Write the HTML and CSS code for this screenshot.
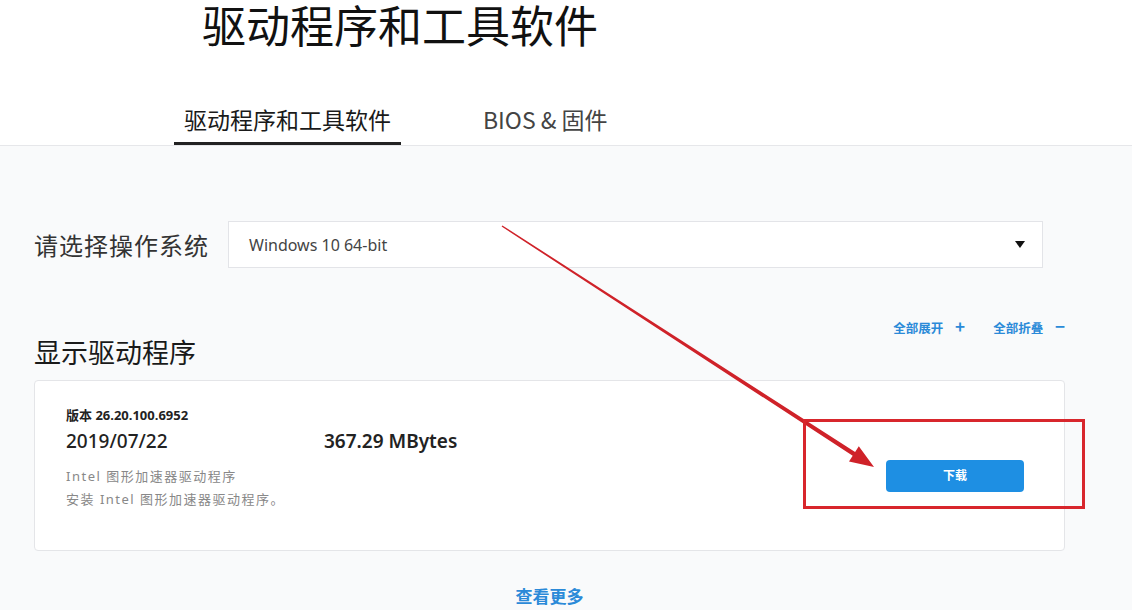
FILE: index.html
```html
<!DOCTYPE html>
<html lang="zh-CN">
<head>
    <meta charset="UTF-8">
    <meta name="viewport" content="width=device-width, initial-scale=1.0">
    <title>驱动程序和工具软件</title>
    <link rel="stylesheet" href="styles.css">
</head>
<body>
    <!-- Шапка: заголовок и вкладки -->
    <div class="page-head">
        <h1 class="page-title">驱动程序和工具软件</h1>
        <div class="tabs">
            <a class="tab active">驱动程序和工具软件</a>
            <a class="tab">BIOS &amp; 固件</a>
        </div>
    </div>

    <div class="content">
        <div class="os-row">
            <label class="os-label">请选择操作系统</label>
            <div class="os-select">
                <span>Windows 10 64-bit</span>
                <span class="caret"></span>
            </div>
        </div>

        <div class="list-head">
            <h2>显示驱动程序</h2>
            <div class="toggles">
                <a class="toggle">全部展开 <span class="sign">+</span></a>
                <a class="toggle">全部折叠 <span class="sign">−</span></a>
            </div>
        </div>

        <div class="driver-card">
            <div class="driver-info">
                <div class="version">版本 26.20.100.6952</div>
                <div class="meta">
                    <span class="date">2019/07/22</span>
                    <span class="size">367.29 MBytes</span>
                </div>
                <p class="desc">Intel 图形加速器驱动程序<br>安装 Intel 图形加速器驱动程序。</p>
            </div>
            <a class="download-btn">下载</a>
        </div>

        <div class="more"><a>查看更多</a></div>
    </div>

    <!-- Пометки поверх страницы: стрелка и рамка -->
    <svg class="mark-arrow" width="1132" height="610" viewBox="0 0 1132 610">
        <polygon fill="#cf2229" points="502.4,225.4 855.1,452.1 858.8,446.3 874,467 849,461.5 852.7,455.8 501.6,226.6"/>
    </svg>
    <div class="mark-box"></div>
</body>
</html>
```

FILE: styles.css
```css
body {
    margin: 0;
    font-family: "Noto Sans", "Noto Sans CJK SC", sans-serif;
    background-color: #f9fafb;
    color: #222;
    width: 1132px;
    height: 610px;
    overflow: hidden;
    position: relative;
}
.page-head {
    background-color: #fff;
    border-bottom: 1px solid #e6e7ea;
}
.page-title {
    margin: 0;
    padding-left: 202px;
    font-family: "Noto Sans CJK SC", sans-serif;
    font-size: 44px;
    font-weight: 400;
    line-height: 48px;
    color: #111;
}
.tabs {
    display: flex;
    gap: 72px;
    padding-left: 174px;
    margin-top: 57px;
}
.tab {
    font-family: "Noto Sans CJK SC", sans-serif;
    font-size: 23px;
    line-height: 28px;
    padding: 0 10px 9px;
    border-bottom: 3px solid transparent;
    color: #444;
}
.tab.active {
    color: #1a1a1a;
    border-bottom-color: #222;
}
.content {
    padding: 0 67px 0 34px;
}
.os-row {
    display: flex;
    align-items: center;
    margin-top: 75px;
}
.os-label {
    font-family: "Noto Sans CJK SC", sans-serif;
    font-size: 24px;
    width: 194px;
    color: #333;
    letter-spacing: 1px;
}
.os-select {
    width: 815px;
    height: 47px;
    box-sizing: border-box;
    border: 1px solid #e3e4e8;
    background-color: #fff;
    display: flex;
    align-items: center;
    justify-content: space-between;
    padding: 0 17px 0 20px;
    font-size: 16px;
    color: #444;
}
.caret {
    width: 0;
    height: 0;
    border-left: 5px solid transparent;
    border-right: 5px solid transparent;
    border-top: 7px solid #111;
}
.list-head {
    display: flex;
    justify-content: space-between;
    align-items: flex-start;
    margin-top: 50px;
}
.list-head h2 {
    margin: 16px 0 10px;
    font-family: "Noto Sans CJK SC", sans-serif;
    font-size: 27px;
    font-weight: 400;
    line-height: 36px;
    color: #1a1a1a;
}
.toggles {
    display: flex;
    gap: 28px;
}
.toggle {
    font-family: "Noto Sans CJK SC", sans-serif;
    font-size: 12.5px;
    font-weight: 700;
    line-height: 16px;
    color: #2b8ad8;
}
.toggle .sign {
    font-size: 17px;
    margin-left: 9px;
}
.driver-card {
    height: 171px;
    box-sizing: border-box;
    background-color: #fff;
    border: 1px solid #e4e5e8;
    border-radius: 4px;
    display: flex;
    padding: 25px 40px 0 31px;
}
.driver-info {
    flex: 1;
}
.version {
    font-size: 13px;
    font-weight: 700;
    line-height: 18px;
}
.meta {
    display: flex;
    font-size: 19px;
    font-weight: 500;
    line-height: 26px;
    margin-top: 4px;
}
.date {
    width: 258px;
}
.size {
    font-weight: 600;
}
.desc {
    margin: 11px 0 0;
    font-size: 13px;
    line-height: 23px;
    color: #888;
    letter-spacing: 1.5px;
}
.download-btn {
    align-self: flex-start;
    margin-top: 54px;
    width: 138px;
    height: 32px;
    line-height: 32px;
    text-align: center;
    background-color: #1e8fe3;
    color: #fff;
    border-radius: 4px;
    font-size: 12px;
    font-weight: 700;
}
.more {
    text-align: center;
    margin-top: 34px;
}
.more a {
    display: inline-block;
    font-family: "Noto Sans CJK SC", sans-serif;
    font-size: 17px;
    font-weight: 700;
    line-height: 22px;
    color: #2b8ad8;
}
.mark-arrow {
    position: absolute;
    left: 0;
    top: 0;
    pointer-events: none;
}
.mark-box {
    position: absolute;
    left: 803px;
    top: 419px;
    width: 276px;
    height: 84px;
    border: 3px solid #d8262c;
}
```
